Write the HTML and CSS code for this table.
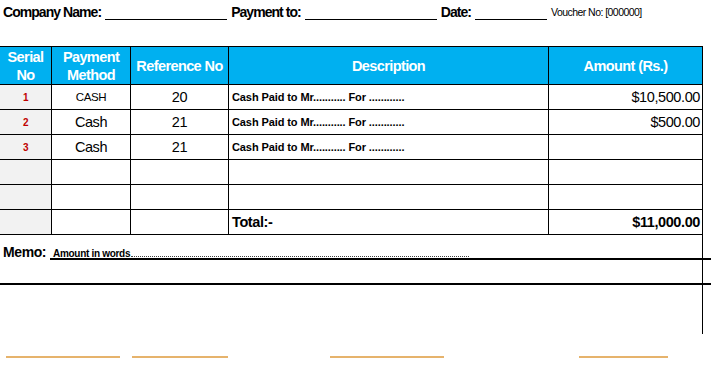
FILE: index.html
```html
<!DOCTYPE html>
<html>
<head>
<meta charset="utf-8">
<link rel="stylesheet" href="styles.css">
</head>
<body>
<div class="page">
  <div class="top">
    <span class="lbl">Company Name:</span><span class="blank w1"></span>
    <span class="lbl">Payment to:</span><span class="blank w2"></span>
    <span class="lbl">Date:</span><span class="blank w3"></span>
    <span class="voucher">Voucher No: [000000]</span>
  </div>

  <table class="grid">
    <colgroup>
      <col class="c1"><col class="c2"><col class="c3"><col class="c4"><col class="c5">
    </colgroup>
    <thead>
      <tr>
        <th>Serial<br>No</th>
        <th>Payment<br>Method</th>
        <th>Reference No</th>
        <th>Description</th>
        <th>Amount (Rs.)</th>
      </tr>
    </thead>
    <tbody>
      <tr>
        <td class="sn">1</td><td class="small">CASH</td><td class="ctr">20</td>
        <td class="desc">Cash Paid to Mr........... For ............</td><td class="amt">$10,500.00</td>
      </tr>
      <tr>
        <td class="sn">2</td><td class="ctr">Cash</td><td class="ctr">21</td>
        <td class="desc">Cash Paid to Mr........... For ............</td><td class="amt">$500.00</td>
      </tr>
      <tr>
        <td class="sn">3</td><td class="ctr">Cash</td><td class="ctr">21</td>
        <td class="desc">Cash Paid to Mr........... For ............</td><td class="amt"></td>
      </tr>
      <tr><td class="sn"></td><td></td><td></td><td></td><td></td></tr>
      <tr><td class="sn"></td><td></td><td></td><td></td><td></td></tr>
      <tr>
        <td class="sn"></td><td></td><td></td>
        <td class="total">Total:-</td><td class="amt bold">$11,000.00</td>
      </tr>
    </tbody>
  </table>

  <div class="memo">
    <div class="memo-row">
      <span class="memo-lbl">Memo:</span>
      <span class="words">Amount in words<span class="dashes"></span></span>
    </div>
    <div class="rule rule-a"></div>
    <div class="memo-blank"></div>
    <div class="rule rule-b"></div>
    <div class="memo-space"></div>
  </div>

  <div class="signs">
    <span class="sig s1"></span>
    <span class="sig s2"></span>
    <span class="sig s3"></span>
    <span class="sig s4"></span>
  </div>
</div>
</body>
</html>
```

FILE: styles.css
```css
html, body {
  margin: 0;
  padding: 0;
  background: #fff;
}
body {
  font-family: "Liberation Sans", Arial, sans-serif;
  color: #000;
  width: 711px;
  height: 370px;
  overflow: hidden;
}
.page {
  width: 711px;
}
.top {
  display: flex;
  align-items: flex-end;
  height: 22px;
  padding-left: 3px;
}
.lbl {
  font-weight: bold;
  font-size: 14px;
  letter-spacing: -0.95px;
  line-height: 20px;
}
.blank {
  display: inline-block;
  border-bottom: 1.5px solid #000;
  height: 0;
  margin: 0 4px 2px 4px;
}
.w1 { width: 122px; }
.w2 { width: 132px; }
.w3 { width: 72px; }
.voucher {
  font-size: 10.5px;
  letter-spacing: -0.55px;
  line-height: 20px;
}

.grid {
  margin-top: 24px;
  margin-left: -1px;
  border-collapse: collapse;
  table-layout: fixed;
  width: 703px;
}
.c1 { width: 52px; }
.c2 { width: 79px; }
.c3 { width: 98px; }
.c4 { width: 320px; }
.c5 { width: 154px; }
.grid th, .grid td {
  border: 1px solid #000;
  padding: 0;
}
.grid th {
  background: #00b0f0;
  color: #fff;
  font-weight: bold;
  font-size: 14.5px;
  letter-spacing: -0.6px;
  line-height: 18px;
  height: 37px;
  text-align: center;
}
.grid td {
  height: 24px;
  font-size: 14.5px;
  letter-spacing: -0.4px;
  vertical-align: middle;
}
.grid td.sn {
  background: #f2f2f2;
  color: #c00000;
  font-weight: bold;
  font-size: 10px;
  text-align: center;
}
.grid td.small {
  font-size: 11.5px;
  text-align: center;
}
.grid td.ctr {
  text-align: center;
}
.grid td.desc {
  font-weight: bold;
  font-size: 11px;
  letter-spacing: -0.1px;
  padding-left: 3px;
}
.grid td.amt {
  text-align: right;
  padding-right: 2px;
}
.grid td.bold {
  font-weight: bold;
}
.grid td.total {
  font-weight: bold;
  padding-left: 3px;
}

.memo {
  width: 702px;
  border-right: 1px solid #000;
}
.memo-row {
  display: flex;
  align-items: baseline;
  height: 23px;
  padding-left: 3px;
}
.memo-lbl {
  font-weight: bold;
  font-size: 14px;
  letter-spacing: -0.4px;
  line-height: 34px;
  width: 50px;
}
.words {
  font-weight: bold;
  font-size: 10px;
  letter-spacing: -0.3px;
  line-height: 34px;
  display: inline-flex;
  align-items: baseline;
}
.dashes {
  display: inline-block;
  width: 338px;
  border-bottom: 1px dotted #444;
  height: 0;
  margin-left: 1px;
}
.rule {
  height: 2px;
  background: #000;
}
.rule-a {
  margin-left: 50px;
  margin-right: -10px;
}
.rule-b {
  margin-right: -10px;
}
.memo-blank {
  height: 23px;
}
.memo-space {
  height: 49px;
}
.signs {
  display: flex;
  margin-top: 22px;
  padding-left: 6px;
}
.sig {
  display: block;
  height: 1.5px;
  background: #e6b36c;
}
.s1 { width: 114px; }
.s2 { width: 96px; margin-left: 12px; }
.s3 { width: 114px; margin-left: 102px; }
.s4 { width: 89px; margin-left: 135px; }
```
